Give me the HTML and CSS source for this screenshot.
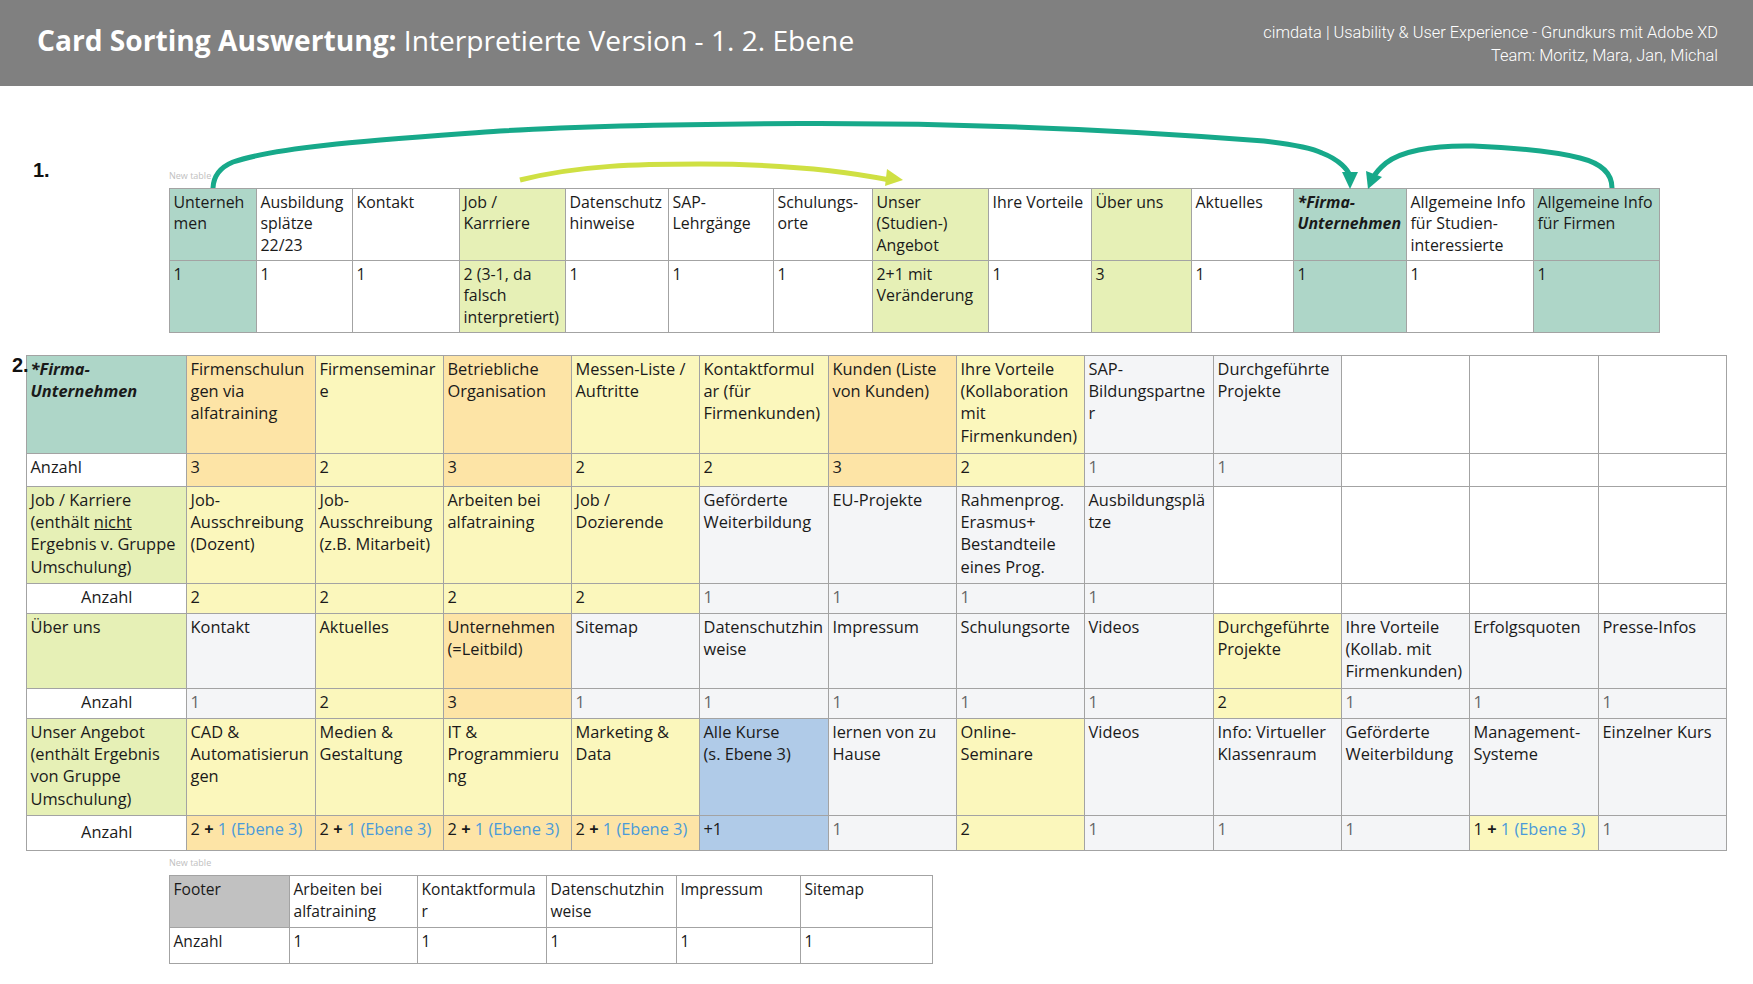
FILE: index.html
```html
<!DOCTYPE html>
<html lang="de">
<head>
<meta charset="utf-8">
<title>Card Sorting Auswertung</title>
<link rel="stylesheet" href="styles.css">
</head>
<body>
<header class="top">
  <h1 class="title"><b>Card Sorting Auswertung:</b> Interpretierte Version - 1. 2. Ebene</h1>
  <div class="meta">
    <div>cimdata | Usability &amp; User Experience - Grundkurs mit Adobe XD</div>
    <div>Team: Moritz, Mara, Jan, Michal</div>
  </div>
</header>
<main class="sheet">
  <svg class="arrows" width="1753" height="984" viewBox="0 0 1753 984" aria-hidden="true">
    <path class="teal" d="M213 188C213.500 175 221 167 233 162C280 146 380 140 500 131C600 125 700 124 800 123.500C950 123 1100 128 1264 141C1290 144 1310 147 1322 153C1340 160 1348 170 1350 176"/>
    <polygon class="tealf" points="1342,172 1358,172 1350,189"/>
    <path class="teal" d="M1612 188C1612 172 1600 163 1580 158C1560 153 1520 148 1473 146C1430 145 1400 152 1386 163C1380 168 1376 172 1373 178"/>
    <polygon class="tealf" points="1366,171 1382,177 1368,189"/>
    <path class="lime" d="M520 180C580 165 640 164 700 164C780 164 840 170 890 180"/>
    <polygon class="limef" points="887,169 903,180 885,186"/>
  </svg>
  <span class="num num1">1.</span>
  <span class="num num2">2.</span>

  <div class="new new1">New table</div>
  <table class="grid t1">
    <colgroup><col class="a1"><col class="a2"><col class="a3"><col class="a4"><col class="a5"><col class="a6"><col class="a7"><col class="a8"><col class="a9"><col class="a10"><col class="a11"><col class="a12"><col class="a13"><col class="a14"></colgroup>
    <tr>
      <td class="teal-c">Unterneh men</td><td>Ausbildung splätze 22/23</td><td>Kontakt</td><td class="green">Job / Karrriere</td><td>Datenschutz hinweise</td><td>SAP-Lehrgänge</td><td>Schulungs-orte</td><td class="green">Unser (Studien-) Angebot</td><td>Ihre Vorteile</td><td class="green">Über uns</td><td>Aktuelles</td><td class="teal-c"><b><i>*Firma-Unternehmen</i></b></td><td>Allgemeine Info für Studien-interessierte</td><td class="teal-c">Allgemeine Info für Firmen</td>
    </tr>
    <tr>
      <td class="teal-c">1</td><td>1</td><td>1</td><td class="green">2 (3-1, da falsch interpretiert)</td><td>1</td><td>1</td><td>1</td><td class="green">2+1 mit Veränderung</td><td>1</td><td class="green">3</td><td>1</td><td class="teal-c">1</td><td>1</td><td class="teal-c">1</td>
    </tr>
  </table>

  <table class="grid t2">
    <colgroup><col class="b1"><col class="b2"><col class="b3"><col class="b4"><col class="b5"><col class="b6"><col class="b7"><col class="b8"><col class="b9"><col class="b10"><col class="b11"><col class="b12"><col class="b13"></colgroup>
    <tr class="r1">
      <td class="teal-c"><b><i>*Firma-Unternehmen</i></b></td><td class="orange">Firmenschulungen via alfatraining</td><td class="yellow">Firmenseminare</td><td class="orange">Betriebliche Organisation</td><td class="yellow">Messen-Liste / Auftritte</td><td class="yellow">Kontaktformul<br>ar (für Firmenkunden)</td><td class="orange">Kunden (Liste von Kunden)</td><td class="yellow">Ihre Vorteile (Kollaboration mit Firmenkunden)</td><td class="grey">SAP-Bildungspartner</td><td class="grey">Durchgeführte Projekte</td><td></td><td></td><td></td>
    </tr>
    <tr class="r2">
      <td>Anzahl</td><td class="orange">3</td><td class="yellow">2</td><td class="orange">3</td><td class="yellow">2</td><td class="yellow">2</td><td class="orange">3</td><td class="yellow">2</td><td class="grey">1</td><td class="grey">1</td><td></td><td></td><td></td>
    </tr>
    <tr class="r3">
      <td class="green">Job / Karriere (enthält <u>nicht</u> Ergebnis v. Gruppe Umschulung)</td><td class="yellow">Job-Ausschreibung (Dozent)</td><td class="yellow">Job-Ausschreibung (z.B. Mitarbeit)</td><td class="yellow">Arbeiten bei alfatraining</td><td class="yellow">Job / Dozierende</td><td class="grey">Geförderte Weiterbildung</td><td class="grey">EU-Projekte</td><td class="grey">Rahmenprog. Erasmus+ Bestandteile eines Prog.</td><td class="grey">Ausbildungsplätze</td><td></td><td></td><td></td><td></td>
    </tr>
    <tr class="r4">
      <td class="center">Anzahl</td><td class="yellow">2</td><td class="yellow">2</td><td class="yellow">2</td><td class="yellow">2</td><td class="grey">1</td><td class="grey">1</td><td class="grey">1</td><td class="grey">1</td><td></td><td></td><td></td><td></td>
    </tr>
    <tr class="r5">
      <td class="green">Über uns</td><td class="grey">Kontakt</td><td class="yellow">Aktuelles</td><td class="orange">Unternehmen (=Leitbild)</td><td class="grey">Sitemap</td><td class="grey">Datenschutzhinweise</td><td class="grey">Impressum</td><td class="grey">Schulungsorte</td><td class="grey">Videos</td><td class="yellow">Durchgeführte Projekte</td><td class="grey">Ihre Vorteile (Kollab. mit Firmenkunden)</td><td class="grey">Erfolgsquoten</td><td class="grey">Presse-Infos</td>
    </tr>
    <tr class="r4">
      <td class="center">Anzahl</td><td class="grey">1</td><td class="yellow">2</td><td class="orange">3</td><td class="grey">1</td><td class="grey">1</td><td class="grey">1</td><td class="grey">1</td><td class="grey">1</td><td class="yellow">2</td><td class="grey">1</td><td class="grey">1</td><td class="grey">1</td>
    </tr>
    <tr class="r3">
      <td class="green">Unser Angebot (enthält Ergebnis von Gruppe Umschulung)</td><td class="yellow">CAD &amp; Automatisierungen</td><td class="yellow">Medien &amp; Gestaltung</td><td class="yellow">IT &amp; Programmierung</td><td class="yellow">Marketing &amp; Data</td><td class="blue">Alle Kurse<br>(s. Ebene 3)</td><td class="grey">lernen von zu Hause</td><td class="yellow">Online-Seminare</td><td class="grey">Videos</td><td class="grey">Info: Virtueller Klassenraum</td><td class="grey">Geförderte Weiterbildung</td><td class="grey">Management-Systeme</td><td class="grey">Einzelner Kurs</td>
    </tr>
    <tr class="r8">
      <td class="center low">Anzahl</td><td class="orange">2 <b>+</b> <span class="link">1 (Ebene 3)</span></td><td class="orange">2 <b>+</b> <span class="link">1 (Ebene 3)</span></td><td class="orange">2 <b>+</b> <span class="link">1 (Ebene 3)</span></td><td class="orange">2 <b>+</b> <span class="link">1 (Ebene 3)</span></td><td class="blue">+1</td><td class="grey">1</td><td class="yellow">2</td><td class="grey">1</td><td class="grey">1</td><td class="grey">1</td><td class="yellow">1 <b>+</b> <span class="link">1 (Ebene 3)</span></td><td class="grey">1</td>
    </tr>
  </table>

  <div class="new new2">New table</div>
  <table class="grid t3">
    <colgroup><col class="f1"><col class="f2"><col class="f3"><col class="f4"><col class="f5"><col class="f6"></colgroup>
    <tr class="f-r1"><td class="footer-c">Footer</td><td>Arbeiten bei alfatraining</td><td>Kontaktformula<br>r</td><td>Datenschutzhinweise</td><td>Impressum</td><td>Sitemap</td></tr>
    <tr class="f-r2"><td>Anzahl</td><td>1</td><td>1</td><td>1</td><td>1</td><td>1</td></tr>
  </table>
</main>
</body>
</html>
```
FILE: styles.css
```css
* { box-sizing: border-box; }
html, body { margin: 0; padding: 0; }
body { width: 1753px; height: 984px; overflow: hidden; background: #fff; color: #1a1a1a; font-family: "Open Sans", sans-serif; }
.top { height: 86px; background: #808080; color: #fff; display: flex; justify-content: space-between; align-items: flex-start; padding: 0 35px 0 37px; }
.title { margin: 20px 0 0; font-size: 28.15px; line-height: 40px; font-weight: 400; white-space: nowrap; }
.title b { font-weight: 700; }
.meta { margin-top: 21px; font-family: Roboto, "Liberation Sans", sans-serif; font-weight: 300; font-size: 16.4px; line-height: 23px; text-align: right; }
.sheet { position: relative; height: 898px; padding-top: 102px; }
.arrows { position: absolute; left: 0; top: -86px; pointer-events: none; z-index: 2; }
.teal { fill: none; stroke: #17a98a; stroke-width: 5px; }
.tealf { fill: #17a98a; }
.lime { fill: none; stroke: #cfe043; stroke-width: 5px; }
.limef { fill: #cfe043; }
.num { position: absolute; font-family: "Liberation Sans", sans-serif; font-weight: 700; font-size: 20px; line-height: 24px; color: #111; }
.num1 { left: 33px; top: 72px; }
.num2 { left: 12px; top: 267px; z-index: 1; }
.new { position: absolute; left: 169px; font-size: 9px; line-height: 12px; color: #c0c0c0; }
.new1 { top: 84px; }
.new2 { top: 771px; }
.grid { border-collapse: collapse; table-layout: fixed; }
.grid td { border: 1px solid #a3a3a3; padding: 2.5px 3px 2px 3.5px; vertical-align: top; overflow-wrap: anywhere; }
.t1 { width: 1490px; margin-left: 169px; font-size: 15.9px; line-height: 21.7px; }
.t1 tr { height: 72px; }
.a1 { width: 87px; } .a2 { width: 96px; } .a3 { width: 107px; } .a4 { width: 106px; } .a5 { width: 103px; } .a6 { width: 105px; } .a7 { width: 99px; }
.a8 { width: 116px; } .a9 { width: 103px; } .a10 { width: 100px; } .a11 { width: 102px; } .a12 { width: 113px; } .a13 { width: 127px; } .a14 { width: 126px; }
.t2 { width: 1700px; margin: 22px 0 0 26px; font-size: 16.4px; line-height: 22.4px; }
.t2 td { padding-top: 1.5px; }
.b1 { width: 160px; } .b2 { width: 129px; } .b3 { width: 128px; } .b4 { width: 128px; } .b5 { width: 128px; } .b6 { width: 129px; } .b7 { width: 128px; }
.b8 { width: 128px; } .b9 { width: 129px; } .b10 { width: 128px; } .b11 { width: 128px; } .b12 { width: 129px; } .b13 { width: 128px; }
.r1 { height: 98px; } .r2 { height: 33px; } .r3 { height: 97px; } .r4 { height: 30px; } .r5 { height: 75px; } .r8 { height: 35px; }
.t3 { width: 763px; margin: 24px 0 0 169px; font-size: 15.6px; line-height: 22px; }
.t3 td { padding-top: 1.5px; }
.f1 { width: 120px; } .f2 { width: 128px; } .f3 { width: 129px; } .f4 { width: 130px; } .f5 { width: 124px; } .f6 { width: 132px; }
.f-r1 { height: 52px; } .f-r2 { height: 36px; }
.teal-c { background: #aed6c8; }
.green { background: #e6f0b6; }
.yellow { background: #fbf7bc; }
.orange { background: #fde4a6; }
.grey { background: #f4f5f7; }
.r2 .grey, .r4 .grey, .r8 .grey { color: #666; }
.blue { background: #b0cbe8; }
.footer-c { background: #c1c1c1; }
.grid td.center { text-align: center; }
.grid td.low { padding-top: 5px; }
.link { color: #4a9ad9; }
```
